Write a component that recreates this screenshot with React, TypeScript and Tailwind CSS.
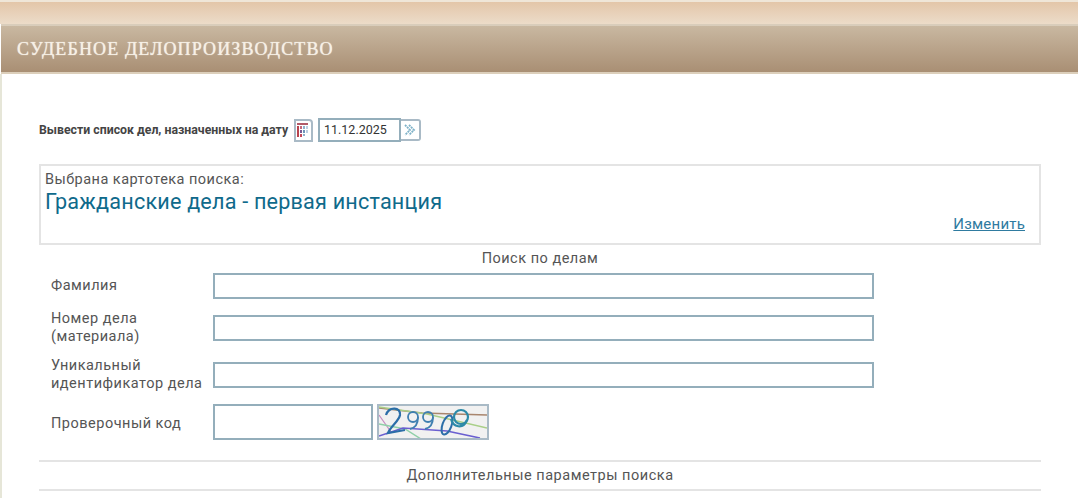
function Field({ label }: { label: React.ReactNode }) {
  return (
    <div className="flex items-center">
      <div className="w-[162px] whitespace-nowrap pl-3 text-[14.5px] leading-[18px] tracking-[0.5px] text-[#555]">{label}</div>
      <div className="ml-[12px] h-[26px] w-[661px] border-2 border-[#94aebb] bg-white" />
    </div>
  );
}

function CalendarIcon() {
  return (
    <svg width="13" height="15" viewBox="0 0 13 15">
      <rect x="0" y="0" width="11" height="2" fill="#b25a68" />
      <rect x="0" y="3" width="2" height="11" fill="#b8434f" />
      <rect x="3" y="3" width="2" height="3" fill="#c46a7c" />
      <rect x="3" y="7" width="2" height="3" fill="#7a5a92" />
      <rect x="3" y="11" width="2" height="3" fill="#c4485a" />
      <rect x="6" y="3" width="2" height="3" fill="#8fb0cc" />
      <rect x="6" y="7" width="2" height="3" fill="#6f93b8" />
      <rect x="6" y="11" width="2" height="2" fill="#8fb0cc" />
      <rect x="9" y="3" width="2" height="3" fill="#bcd0e2" />
      <rect x="9" y="7" width="2" height="3" fill="#bcd0e2" />
    </svg>
  );
}

function Captcha() {
  return (
    <div className="h-[36px] w-[112px] border-2 border-[#a9bac6] bg-[#f1f1f1]">
      <svg width="108" height="32" viewBox="2 2 108 32" className="block">
        <path d="M2 4 L45 9 L110 11" stroke="#a9866e" strokeWidth="1.4" fill="none" />
        <path d="M2 3 L50 10 L110 24" stroke="#a9cf88" strokeWidth="1.4" fill="none" />
        <path d="M2 11 L14 28" stroke="#c58ac0" strokeWidth="1.2" fill="none" />
        <path d="M2 20 L28 25 L44 35" stroke="#8fd0a8" strokeWidth="1.4" fill="none" />
        <path d="M2 32 L26 24 L70 27 L103 34" stroke="#6a5fd0" strokeWidth="1.6" fill="none" />
        <path d="M9 11 C12 2 24 3 23 11 C22 17 14 22 11 29 L28 26" stroke="#2c6ea8" strokeWidth="2.2" fill="none" />
        <circle cx="36" cy="13" r="5" stroke="#3f7fb0" strokeWidth="1.8" fill="none" />
        <path d="M41 13 C41 20 38 24 33 25" stroke="#3f7fb0" strokeWidth="1.8" fill="none" />
        <circle cx="51" cy="13" r="5" stroke="#3f7fb0" strokeWidth="1.8" fill="none" />
        <path d="M56 13 C56 20 53 24 48 25" stroke="#3f7fb0" strokeWidth="1.8" fill="none" />
        <ellipse cx="70" cy="21" rx="4.5" ry="10" transform="rotate(20 70 21)" stroke="#2c6ea8" strokeWidth="2" fill="none" />
        <circle cx="84" cy="13" r="7" stroke="#2c8aa8" strokeWidth="2.2" fill="none" />
        <path d="M90 16 C86 26 76 23 74 15" stroke="#2c8aa8" strokeWidth="2.2" fill="none" />
      </svg>
    </div>
  );
}

export default function App() {
  return (
    <div className="h-[498px] w-[1078px] overflow-hidden bg-white font-['Roboto',sans-serif]">
      {/* top band */}
      <div className="h-[24px] border-t-2 border-[#efe6d8] bg-gradient-to-b from-[#e3c6a9] to-[#ecdcc9]" />
      {/* title bar */}
      <div className="ml-px flex h-[50px] items-center border-t-2 border-[#d9cdbb] border-b-2 border-b-[#dccfbb] bg-gradient-to-b from-[#c9b8a1] to-[#a98f74] pl-[16px]">
        <h1 className="font-['Liberation_Serif',serif] text-[18px] tracking-[1.12px] text-[#f6f0e6] [text-shadow:0_0_1px_#f6f0e6]">
          СУДЕБНОЕ ДЕЛОПРОИЗВОДСТВО
        </h1>
      </div>

      <div className="h-[424px] border-l-2 border-[#e6e6d8] pl-[37px]">
        {/* date row */}
        <div className="flex items-center pt-[44px]">
          <span className="w-[255px] text-[12.3px] font-bold text-[#444]">Вывести список дел, назначенных на дату</span>
          <div className="flex h-[23px] w-[19px] items-center justify-center rounded-tr-[4px] border-2 border-[#a9bac6] bg-white">
            <CalendarIcon />
          </div>
          <div className="ml-[5px] flex h-[24px] w-[83px] items-center border-2 border-[#94aebb] pl-[4px] text-[12.5px] text-[#333]">
            11.12.2025
          </div>
          <div className="flex h-[22px] w-[20px] items-center justify-center rounded-r-[3px] border-2 border-l-0 border-[#a9bac6] bg-white">
            <svg width="12" height="12" viewBox="0 0 12 12" fill="none" stroke="#7fb2c8" strokeWidth="1.8" strokeDasharray="2 0.8">
              <path d="M1 1 L6 6 L1 11" />
              <path d="M5 1 L10 6 L5 11" />
            </svg>
          </div>
        </div>

        {/* selected card index */}
        <div className="mt-[22px] flex h-[81px] w-[1002px] flex-col border-2 border-[#e4e4e4] pl-[4px] pr-[14px]">
          <div className="pt-[5px] text-[14.5px] leading-[18px] tracking-[0.47px] text-[#555]">Выбрана картотека поиска:</div>
          <div className="text-[21.6px] leading-[26px] tracking-[0.2px] text-[#0f6a8b]">Гражданские дела - первая инстанция</div>
          <div className="mt-auto pb-[11px] text-right leading-[18px]">
            <a className="text-[15px] tracking-[0.2px] text-[#2f7ba0] underline">Изменить</a>
          </div>
        </div>

        <div className="w-[1002px] pt-[5px] text-center text-[14.5px] leading-[18px] tracking-[0.5px] text-[#555]">Поиск по делам</div>

        <div className="mt-[5px] flex flex-col">
          <Field label="Фамилия" />
          <div className="mt-[11px]"><Field label={<>Номер дела<br />(материала)</>} /></div>
          <div className="mt-[11px]"><Field label={<>Уникальный<br />идентификатор дела</>} /></div>
          <div className="mt-[11px] flex items-center">
            <div className="w-[162px] whitespace-nowrap pl-3 pt-[4px] text-[14.5px] tracking-[0.5px] text-[#555]">Проверочный код</div>
            <div className="ml-[12px] h-[36px] w-[160px] border-2 border-[#94aebb]" />
            <div className="ml-[4px]"><Captcha /></div>
          </div>
        </div>

        <div className="mt-[20px] w-[1002px] border-y-2 border-[#e4e4e4] pb-[4px] pt-[5px] text-center text-[14.5px] leading-[18px] tracking-[0.52px] text-[#555]">
          Дополнительные параметры поиска
        </div>
      </div>
    </div>
  );
}
